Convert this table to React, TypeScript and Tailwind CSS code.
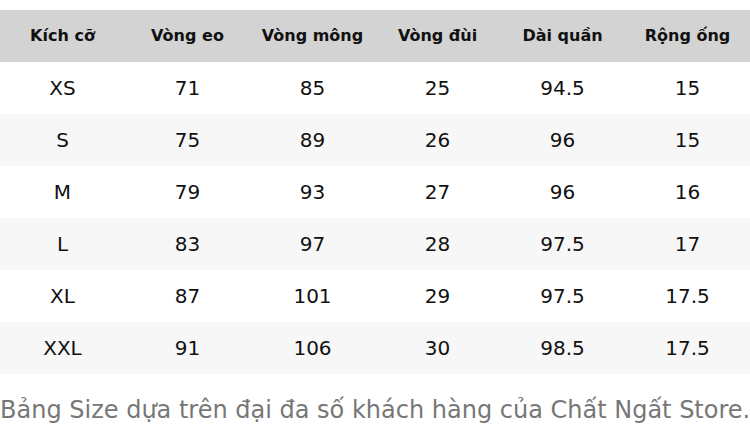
export default function App() {
  const headers = ["Kích cỡ", "Vòng eo", "Vòng mông", "Vòng đùi", "Dài quần", "Rộng ống"];
  const rows = [
    ["XS", "71", "85", "25", "94.5", "15"],
    ["S", "75", "89", "26", "96", "15"],
    ["M", "79", "93", "27", "96", "16"],
    ["L", "83", "97", "28", "97.5", "17"],
    ["XL", "87", "101", "29", "97.5", "17.5"],
    ["XXL", "91", "106", "30", "98.5", "17.5"],
  ];
  return (
    <div className="w-[750px] h-[446px] bg-white pt-[10px]" style={{ fontFamily: '"DejaVu Sans", sans-serif' }}>
      <div className="grid grid-cols-6 h-[52px] bg-[#d3d3d3] items-center">
        {headers.map((h) => (
          <div key={h} className="text-center font-bold text-[16px] text-[#111]">{h}</div>
        ))}
      </div>
      {rows.map((r, i) => (
        <div key={i} className={`grid grid-cols-6 h-[52px] items-center ${i % 2 === 1 ? "bg-[#f7f7f7]" : "bg-white"}`}>
          {r.map((c, j) => (
            <div key={j} className="text-center text-[20px] text-[#111]">{c}</div>
          ))}
        </div>
      ))}
      <div className="mt-[24px] text-[24px] text-[#777] whitespace-nowrap leading-none">
        Bảng Size dựa trên đại đa số khách hàng của Chất Ngất Store.
      </div>
    </div>
  );
}
